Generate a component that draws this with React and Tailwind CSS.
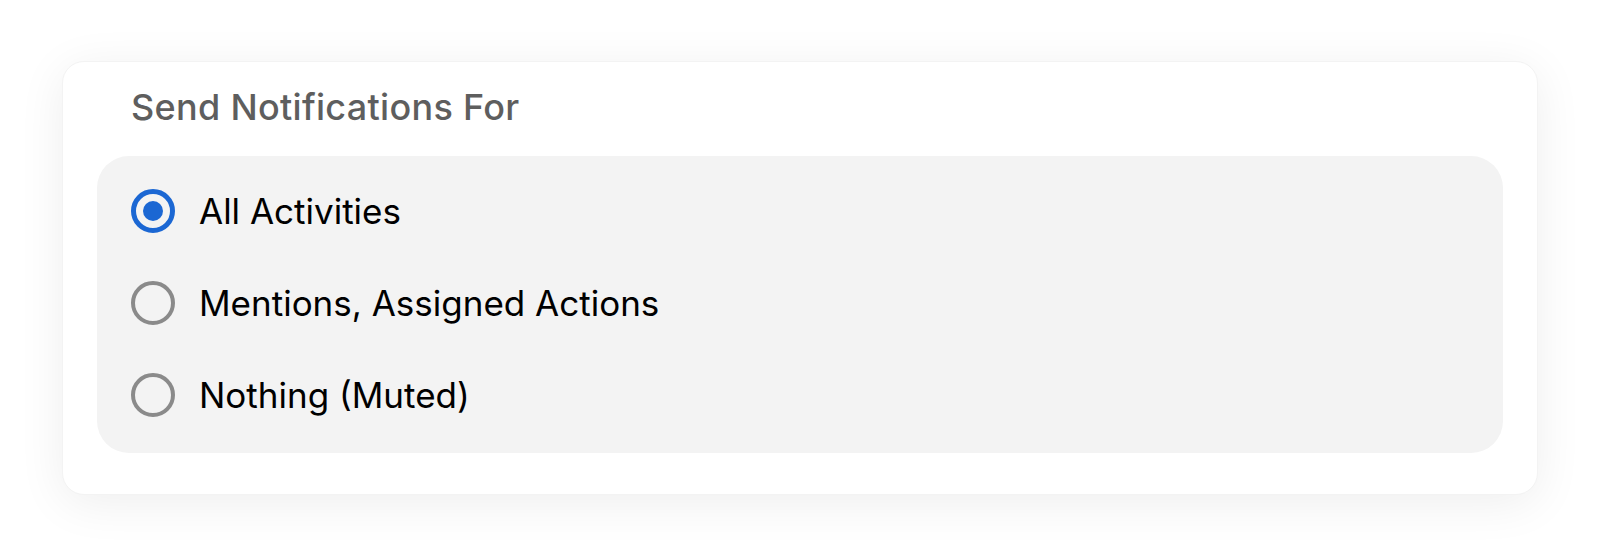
import React, { useState } from 'react';

const options = [
  { id: 'all', label: 'All Activities' },
  { id: 'mentions', label: 'Mentions, Assigned Actions' },
  { id: 'nothing', label: 'Nothing (Muted)' },
];

function Radio({ checked }) {
  if (checked) {
    return (
      <span className="flex h-[44px] w-[44px] shrink-0 items-center justify-center rounded-full border-[5px] border-[#1b67d3]">
        <span className="h-[20px] w-[20px] rounded-full bg-[#1b67d3]" />
      </span>
    );
  }
  return <span className="h-[44px] w-[44px] shrink-0 rounded-full border-[4px] border-[#8a8a8a]" />;
}

export default function App() {
  const [selected, setSelected] = useState('all');

  return (
    <div className="min-h-[559px] bg-white px-[62px] pt-[61px] pb-[65px] font-['Inter','Liberation_Sans',sans-serif]">
      <div className="rounded-[22px] border border-[#f3f3f3] bg-white px-[34px] pt-[23px] pb-[41px] shadow-[0_8px_48px_rgba(0,0,0,0.07)]">
        <h2 className="pl-[34px] text-[36px] font-medium leading-[44px] tracking-[0.3px] text-[#5e5e5e]">
          Send Notifications For
        </h2>
        <div className="mt-[27px] rounded-[32px] bg-[#f3f3f3] px-[34px] pt-[9px] pb-[12px]">
          {options.map((opt) => (
            <button
              key={opt.id}
              onClick={() => setSelected(opt.id)}
              className="flex h-[92px] w-full items-center gap-[24px] text-left"
            >
              <Radio checked={selected === opt.id} />
              <span className="text-[35px] leading-none text-black">{opt.label}</span>
            </button>
          ))}
        </div>
      </div>
    </div>
  );
}
